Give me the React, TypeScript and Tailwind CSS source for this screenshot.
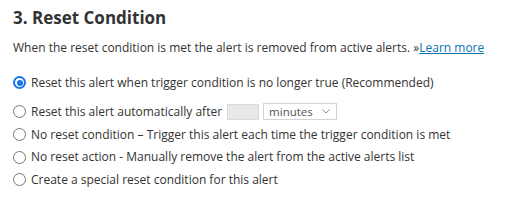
const options = [
  "No reset condition – Trigger this alert each time the trigger condition is met",
  "No reset action - Manually remove the alert from the active alerts list",
  "Create a special reset condition for this alert",
];

function Radio({ checked = false }: { checked?: boolean }) {
  return checked ? (
    <span className="w-[13px] h-[13px] rounded-full border-[2px] border-[#1a73e8] flex items-center justify-center shrink-0">
      <span className="w-[6px] h-[6px] rounded-full bg-[#1a73e8]" />
    </span>
  ) : (
    <span className="w-[13px] h-[13px] rounded-full border-[1.5px] border-[#767676] shrink-0" />
  );
}

export default function App() {
  return (
    <div className="w-[518px] h-[204px] bg-white px-[13px] pt-[6px] text-[#333] font-[family-name:'Open_Sans',sans-serif] text-[12px]">
      <h2 className="text-[17px] font-bold leading-[24px] h-[24px]">3. Reset Condition</h2>
      <p className="leading-[18px] mt-[9px]">
        When the reset condition is met the alert is removed from active alerts. »
        <a href="#" className="text-[#0a74b0] underline">Learn more</a>
      </p>

      <label className="flex items-center gap-[5px] h-[22px] mt-[14.5px]">
        <Radio checked />
        <span>Reset this alert when trigger condition is no longer true (Recommended)</span>
      </label>

      <label className="flex items-center gap-[5px] h-[23.5px] mt-[6.5px]">
        <Radio />
        <span>Reset this alert automatically after</span>
        <span className="w-[32px] h-[16px] bg-[#e8e8e8] border border-[#dadada]" />
        <span className="ml-[-1px] w-[74px] h-[17px] border border-[#d3d3d3] bg-white flex items-center justify-between pl-[5px] pr-[6px] text-[#555] text-[11.5px] leading-none">
          minutes
          <svg width="8" height="5" viewBox="0 0 8 5" className="text-[#888]">
            <polyline points="0.5,0.5 4,4 7.5,0.5" fill="none" stroke="currentColor" strokeWidth="1" />
          </svg>
        </span>
      </label>

      {options.map((o) => (
        <label key={o} className="flex items-center gap-[5px] h-[22.5px]">
          <Radio />
          <span>{o}</span>
        </label>
      ))}
    </div>
  );
}
